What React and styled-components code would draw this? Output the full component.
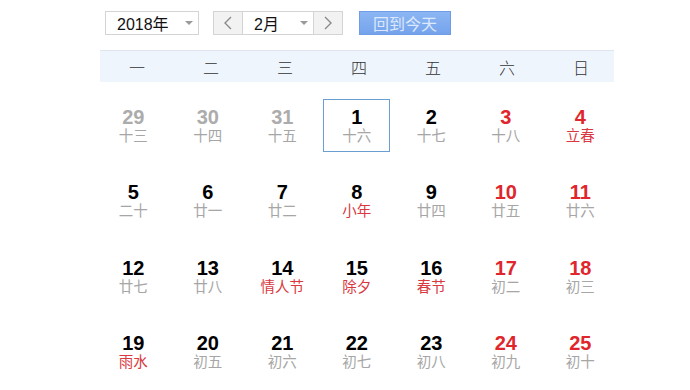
import styled, { createGlobalStyle } from "styled-components";

const GlobalStyle = createGlobalStyle`
  body {
    margin: 0;
    background: #fff;
    font-family: "Liberation Sans", "Noto Sans CJK SC", sans-serif;
  }
`;

const Page = styled.div`
  width: 690px;
  height: 390px;
  overflow: hidden;
`;

const Toolbar = styled.div`
  display: flex;
  align-items: center;
  padding: 11px 0 0 105px;
  height: 24px;
`;

const Select = styled.div`
  box-sizing: border-box;
  width: ${(p) => p.w}px;
  height: 24px;
  display: flex;
  align-items: center;
  justify-content: space-between;
  padding: 0 5px 0 11px;
  border: 1px solid #d4d4d4;
  background: #fff;
  font-size: 16px;
  color: #111;
  font-family: "Liberation Sans", "Noto Sans CJK SC", sans-serif;
`;

const Caret = styled.span`
  width: 0;
  height: 0;
  border-left: 4px solid transparent;
  border-right: 4px solid transparent;
  border-top: 4px solid #9a9a9a;
`;

const MonthGroup = styled.div`
  display: flex;
  margin-left: 14px;
`;

const ArrowBtn = styled.div`
  box-sizing: border-box;
  width: 29px;
  height: 24px;
  display: flex;
  align-items: center;
  justify-content: center;
  background: #f2f2f2;
  border: 1px solid #d4d4d4;
  ${(p) => (p.side === "left" ? "border-right: none;" : "border-left: none;")}
`;

const TodayBtn = styled.div`
  box-sizing: border-box;
  width: 92px;
  height: 24px;
  margin-left: 16px;
  display: flex;
  align-items: center;
  justify-content: center;
  background: linear-gradient(#8cb6f3, #75a3ec);
  border: 1px solid #6e9ce6;
  color: #dce8fb;
  font-size: 16px;
  font-family: "Noto Sans CJK SC", sans-serif;
`;

const WeekBand = styled.div`
  box-sizing: border-box;
  width: 514px;
  height: 32px;
  margin: 15px 0 0 100px;
  background: #eff5fd;
  border-top: 1px solid #dfe5ee;
  display: grid;
  grid-template-columns: repeat(7, 74px);
  align-items: center;
`;

const WeekDay = styled.div`
  text-align: center;
  font-family: "Noto Sans CJK SC", sans-serif;
  font-size: 16px;
  font-weight: 300;
  color: #333;
`;

const DayGrid = styled.div`
  display: grid;
  grid-template-columns: repeat(7, 74.5px);
  grid-auto-rows: 75.3px;
  margin: 6px 0 0 96px;
`;

const Cell = styled.div`
  display: flex;
  align-items: center;
  justify-content: center;
`;

const DayBox = styled.div`
  box-sizing: border-box;
  width: 67px;
  height: 53px;
  padding-top: 7px;
  border: 1px solid ${(p) => (p.selected ? "#6b9fd3" : "transparent")};
  text-align: center;
`;

const DayNum = styled.div`
  font-family: "Liberation Sans", sans-serif;
  font-weight: bold;
  font-size: 20px;
  line-height: 20px;
  color: ${(p) => (p.tone === "gray" ? "#acacac" : p.tone === "red" ? "#e0262c" : "#000")};
`;

const Lunar = styled.div`
  font-family: "Noto Sans CJK SC", sans-serif;
  font-size: 14.5px;
  line-height: 16px;
  color: ${(p) => (p.festival ? "#d93840" : "#a6a6a6")};
`;

const Chevron = ({ dir }) => (
  <svg width="10" height="14" viewBox="0 0 10 14">
    <path
      d={dir === "left" ? "M8 1 L2 7 L8 13" : "M2 1 L8 7 L2 13"}
      fill="none"
      stroke="#8a8a8a"
      strokeWidth="1.4"
    />
  </svg>
);

const weekdays = ["一", "二", "三", "四", "五", "六", "日"];

// [day, lunar, festival?, outside month?]
const days = [
  [29, "十三", false, true], [30, "十四", false, true], [31, "十五", false, true],
  [1, "十六"], [2, "十七"], [3, "十八"], [4, "立春", true],
  [5, "二十"], [6, "廿一"], [7, "廿二"], [8, "小年", true],
  [9, "廿四"], [10, "廿五"], [11, "廿六"],
  [12, "廿七"], [13, "廿八"], [14, "情人节", true], [15, "除夕", true],
  [16, "春节", true], [17, "初二"], [18, "初三"],
  [19, "雨水", true], [20, "初五"], [21, "初六"], [22, "初七"],
  [23, "初八"], [24, "初九"], [25, "初十"],
];

export default function App() {
  return (
    <Page>
      <GlobalStyle />
      <Toolbar>
        <Select w={94}>
          <span>2018年</span>
          <Caret />
        </Select>
        <MonthGroup>
          <ArrowBtn side="left">
            <Chevron dir="left" />
          </ArrowBtn>
          <Select w={72}>
            <span>2月</span>
            <Caret />
          </Select>
          <ArrowBtn side="right">
            <Chevron dir="right" />
          </ArrowBtn>
        </MonthGroup>
        <TodayBtn>回到今天</TodayBtn>
      </Toolbar>
      <WeekBand>
        {weekdays.map((w) => (
          <WeekDay key={w}>{w}</WeekDay>
        ))}
      </WeekBand>
      <DayGrid>
        {days.map(([d, lunar, festival, outside], i) => {
          const weekend = i % 7 >= 5;
          const tone = outside ? "gray" : weekend ? "red" : "black";
          return (
            <Cell key={i}>
              <DayBox selected={!outside && d === 1}>
                <DayNum tone={tone}>{d}</DayNum>
                <Lunar festival={festival}>{lunar}</Lunar>
              </DayBox>
            </Cell>
          );
        })}
      </DayGrid>
    </Page>
  );
}
